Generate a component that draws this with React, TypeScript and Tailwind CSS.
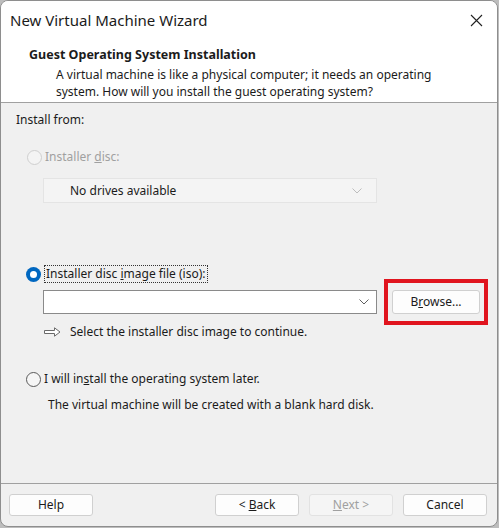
import React from 'react';

const font = { fontFamily: '"Noto Sans", "Segoe UI", sans-serif' };

const Radio = ({ checked, disabled }: { checked?: boolean; disabled?: boolean }) => (
  <span
    className={`inline-flex items-center justify-center w-[15px] h-[15px] rounded-full shrink-0 ${
      checked
        ? 'bg-[#0067c0]'
        : disabled
        ? 'border border-[#cfcfcf] bg-[#f4f4f4]'
        : 'border border-[#5a5a5a] bg-[#f6f6f6]'
    }`}
  >
    {checked && <span className="w-[7px] h-[7px] rounded-full bg-white" />}
  </span>
);

const Chevron = ({ color }: { color: string }) => (
  <svg width="10" height="6" viewBox="0 0 10 6" fill="none">
    <path d="M0.5 0.5L5 5L9.5 0.5" stroke={color} strokeWidth="1" />
  </svg>
);

const Btn = ({ children, disabled, className = '' }: any) => (
  <button
    className={`h-[22px] w-[84px] rounded-[3px] border text-[12px] ${
      disabled
        ? 'border-[#e2e2e2] bg-[#f5f5f5] text-[#a0a0a0]'
        : 'border-[#d0d0d0] bg-[#fdfdfd] text-[#1b1b1b]'
    } ${className}`}
  >
    {children}
  </button>
);

export default function App() {
  return (
    <div className="w-[499px] h-[528px] bg-[#bdbdbd] overflow-hidden" style={font}>
      <div className="w-[498px] h-[527px] rounded-[8px] border border-[#8e8e8e] bg-[#f0f0f0] overflow-hidden flex flex-col text-[12px] text-[#1b1b1b]">
        {/* title + header */}
        <div className="bg-white border-b border-[#a0a0a0] h-[102px]">
          <div className="flex items-center justify-between h-[38px] pl-[9px] pr-[14px]">
            <span className="text-[15px] text-[#1b1b1b]">New Virtual Machine Wizard</span>
            <svg width="13" height="13" viewBox="0 0 13 13">
              <path d="M1 1L12 12M12 1L1 12" stroke="#222" strokeWidth="1.1" />
            </svg>
          </div>
          <div className="pl-[28px] font-bold text-[12.5px] leading-[16px] mt-[8px]">
            Guest Operating System Installation
          </div>
          <div className="pl-[55px] leading-[17px] mt-[3px]">
            <div>A virtual machine is like a physical computer; it needs an operating</div>
            <div>system. How will you install the guest operating system?</div>
          </div>
        </div>

        {/* body */}
        <div className="flex-1 pl-[15px] pt-[9px]">
          <div className="leading-[16px]">Install from:</div>

          <div className="flex items-center gap-[3px] mt-[21px] pl-[11px] text-[#a0a0a0] leading-[16px]">
            <Radio disabled />
            <span>
              Installer <span className="underline">d</span>isc:
            </span>
          </div>
          <div className="ml-[27px] mt-[13px] w-[334px] h-[25px] border border-[#e4e4e4] bg-[#f4f4f4] flex items-center justify-between pl-[26px] pr-[14px]">
            <span className="text-[#1b1b1b]">No drives available</span>
            <Chevron color="#bdbdbd" />
          </div>

          <div className="flex items-center gap-[3px] mt-[62px] pl-[10px] leading-[16px]">
            <Radio checked />
            <span className="border border-dotted border-[#333] px-[1px]">
              Installer disc <span className="underline">i</span>mage file (iso):
            </span>
          </div>
          <div className="flex items-center -mt-[4px]">
            <div className="ml-[27px] w-[334px] h-[24px] border border-[#8a8a8a] bg-white flex items-center justify-end pr-[7px]">
              <Chevron color="#606060" />
            </div>
            <div className="ml-[7px] w-[104px] h-[46px] border-[4px] border-[#e0141e] flex items-center justify-center">
              <Btn className="w-[88px] h-[24px] bg-[#fbfbfb]">
                B<span className="underline">r</span>owse...
              </Btn>
            </div>
          </div>
          <div className="flex items-center gap-[9px] -mt-[1px] ml-[28px] leading-[16px]">
            <svg width="17" height="10" viewBox="0 0 17 10" fill="none">
              <path d="M0.5 3.5H10.5V0.8L16 5L10.5 9.2V6.5H0.5Z" stroke="#6a6a6a" strokeWidth="1" fill="#fff" />
            </svg>
            <span>Select the installer disc image to continue.</span>
          </div>

          <div className="flex items-center gap-[3px] mt-[31px] pl-[10px] leading-[16px]">
            <Radio />
            <span>
              I will in<span className="underline">s</span>tall the operating system later.
            </span>
          </div>
          <div className="ml-[32px] mt-[10px] leading-[16px]">
            The virtual machine will be created with a blank hard disk.
          </div>
        </div>

        {/* footer */}
        <div className="border-t border-[#a0a0a0] h-[43px] flex items-center pl-[8px] pr-[10px]">
          <Btn>Help</Btn>
          <div className="flex-1" />
          <Btn>
            &lt; <span className="underline">B</span>ack
          </Btn>
          <Btn disabled className="ml-[10px]">
            <span className="underline">N</span>ext &gt;
          </Btn>
          <Btn className="ml-[10px]">Cancel</Btn>
        </div>
      </div>
    </div>
  );
}
